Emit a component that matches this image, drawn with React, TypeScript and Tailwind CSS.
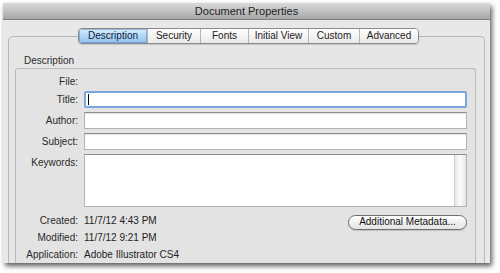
import React from 'react';

const TABS = ['Description', 'Security', 'Fonts', 'Initial View', 'Custom', 'Advanced'];
const TAB_WIDTHS = ['w-[68px]', 'w-[53px]', 'w-[48px]', 'w-[60px]', 'w-[51px]', 'w-[59px]'];

function Field({ focused = false }: { focused?: boolean }) {
  if (focused) {
    return (
      <div className="h-[17px] rounded-[2px] border-2 border-[#7ba8dc] bg-white flex items-center pl-[2px]">
        <div className="w-px h-[11px] bg-black" />
      </div>
    );
  }
  return (
    <div className="h-[17px] border border-[#b3b3b3] border-t-[#8e8e8e] bg-white shadow-[inset_0_1px_1px_rgba(0,0,0,0.12)]" />
  );
}

function Label({ children }: { children: React.ReactNode }) {
  return <div className="w-[62px] text-right shrink-0 text-[#2a2a2a]">{children}</div>;
}

export default function App() {
  return (
    <div
      className="w-[500px] h-[273px] bg-white pt-[3px] pl-[3px] text-[10px] leading-none"
      style={{ fontFamily: '"Liberation Sans", Arial, sans-serif' }}
    >
      <div className="w-[487px] h-[260px] flex flex-col overflow-hidden bg-[#e8e8e8] shadow-[2px_3px_5px_rgba(0,0,0,0.65)]">
        {/* title bar */}
        <div className="h-[17px] shrink-0 flex items-center justify-center bg-gradient-to-b from-[#dadada] to-[#a7a7a7] border-b border-[#7d7d7d] text-[11px] text-[#1e1e1e]">
          Document Properties
        </div>

        <div className="flex-1 flex flex-col px-[5px]">
          {/* segmented tabs */}
          <div className="relative z-10 mt-[8px] h-[16px] flex justify-center">
            <div className="flex rounded-[4px] border border-[#8a8a8a] overflow-hidden shadow-[0_1px_1px_rgba(0,0,0,0.15)] ml-[4px]">
              {TABS.map((t, i) => (
                <div
                  key={t}
                  className={`${TAB_WIDTHS[i]} flex items-center justify-center text-[10px] ${
                    i === 0
                      ? 'bg-gradient-to-b from-[#dcedfc] via-[#b2d6f5] to-[#8fc2ee] text-[#10243a] shadow-[inset_0_0_0_1px_rgba(70,120,190,0.45)]'
                      : 'bg-gradient-to-b from-[#ffffff] to-[#e9e9e9] text-[#222] border-l border-[#b4b4b4]'
                  }`}
                >
                  {t}
                </div>
              ))}
            </div>
          </div>

          {/* tab panel */}
          <div className="-mt-[8px] flex-1 border border-b-0 border-[#b7b7b7] rounded-t-[5px] bg-[#e6e6e6] flex flex-col pl-[6px] pr-[8px]">
            <div className="pt-[19px] pl-[9px] h-[31px] shrink-0 text-[#2a2a2a]">Description</div>
            <div className="flex-1 border border-b-0 border-[#b9b9b9] rounded-t-[3px] bg-[#e3e3e3] pt-[5px] pr-[8px] flex flex-col">
              <div className="h-[16px] flex items-center gap-[6px]">
                <Label>File:</Label>
              </div>
              <div className="mt-[1px] flex items-center gap-[6px]">
                <Label>Title:</Label>
                <div className="flex-1"><Field focused /></div>
              </div>
              <div className="mt-[4px] flex items-center gap-[6px]">
                <Label>Author:</Label>
                <div className="flex-1"><Field /></div>
              </div>
              <div className="mt-[4px] flex items-center gap-[6px]">
                <Label>Subject:</Label>
                <div className="flex-1"><Field /></div>
              </div>
              <div className="mt-[4px] flex items-start gap-[6px]">
                <div className="pt-[4px]"><Label>Keywords:</Label></div>
                <div className="flex-1 h-[53px] flex border border-[#b3b3b3] border-t-[#8e8e8e] bg-white">
                  <div className="flex-1" />
                  <div className="w-[12px] border-l border-[#d0d0d0] bg-gradient-to-r from-[#e9e9e9] via-[#fbfbfb] to-[#e4e4e4]" />
                </div>
              </div>
              <div className="h-[16px] mt-[6px] flex items-center gap-[6px] text-[#1e1e1e]">
                <Label>Created:</Label>
                <div className="flex-1">11/7/12 4:43 PM</div>
                <div className="w-[119px] h-[15px] mt-[2px] rounded-full border border-[#6f6f6f] bg-gradient-to-b from-[#ffffff] to-[#e3e3e3] flex items-center justify-center text-[10px] text-[#111] shadow-[0_1px_1px_rgba(0,0,0,0.15)]">
                  Additional Metadata...
                </div>
              </div>
              <div className="h-[17px] flex items-center gap-[6px] text-[#1e1e1e]">
                <Label>Modified:</Label>
                <div>11/7/12 9:21 PM</div>
              </div>
              <div className="h-[17px] flex items-center gap-[6px] text-[#1e1e1e]">
                <Label>Application:</Label>
                <div>Adobe Illustrator CS4</div>
              </div>
            </div>
          </div>
        </div>
      </div>
    </div>
  );
}
